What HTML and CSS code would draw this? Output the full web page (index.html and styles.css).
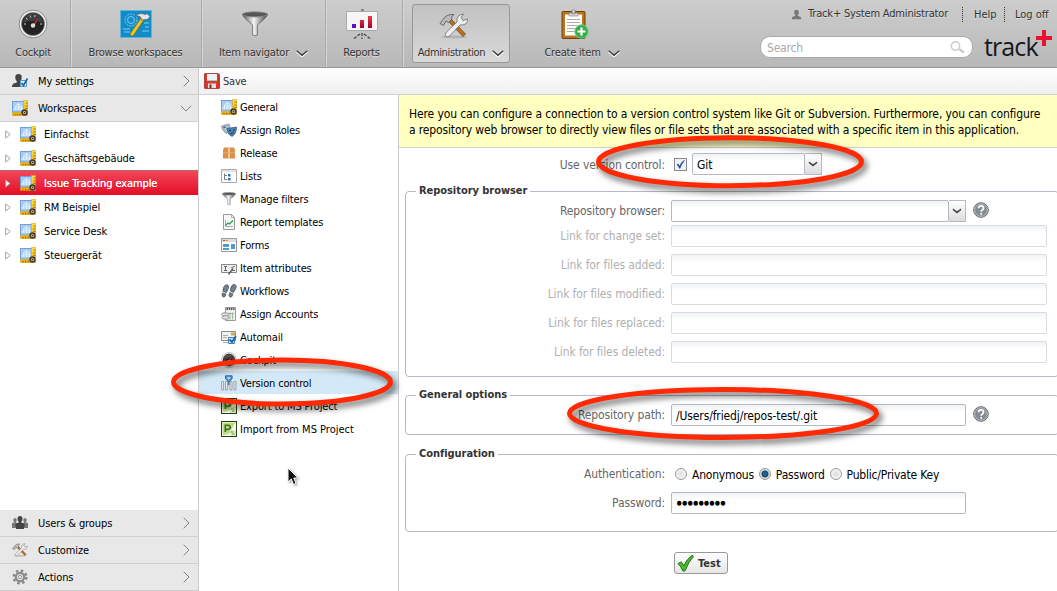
FILE: index.html
```html
<!DOCTYPE html>
<html lang="en">
<head>
<meta charset="utf-8">
<title>Track+ Version control</title>
<link rel="stylesheet" href="styles.css">
</head>
<body>
<svg class="defs" aria-hidden="true">
  <defs>
    <linearGradient id="metal" x1="0" x2="1"><stop offset="0" stop-color="#555"/><stop offset=".45" stop-color="#f4f4f4"/><stop offset="1" stop-color="#444"/></linearGradient>
    <linearGradient id="bar" x1="0" y1="0" x2="0" y2="1"><stop offset="0" stop-color="#f03a4c"/><stop offset="1" stop-color="#a80030"/></linearGradient>
    <linearGradient id="ruler" x1="0" y1="0" x2="0" y2="1"><stop offset="0" stop-color="#ffe14a"/><stop offset="1" stop-color="#e9a800"/></linearGradient>
    <linearGradient id="chrome" x1="0" y1="0" x2="0" y2="1"><stop offset="0" stop-color="#777"/><stop offset=".5" stop-color="#fff"/><stop offset="1" stop-color="#888"/></linearGradient>
    <symbol id="i-gauge" viewBox="0 0 30 30">
      <circle cx="15" cy="15" r="13.900" fill="#eee" stroke="#777" stroke-width=".8"/>
      <circle cx="15" cy="15" r="11.500" fill="#222" stroke="#888" stroke-width=".6"/>
      <path d="M5 14a10 10 0 0 1 20 0q-10-4-20 0" fill="#555" opacity=".6"/>
      <g stroke="#ccc" stroke-width="1"><path d="M6 15h2M8 9l1.600 1.400M12 6.500l.8 2M17 6l-.2 2M24 15h-2"/></g>
      <path d="M14 17 20.500 8.500 16.500 17.500z" fill="#e8232c"/>
      <circle cx="15" cy="16.500" r="2.200" fill="#ddd"/>
    </symbol>
    <symbol id="i-work" viewBox="0 0 16 16">
      <rect x=".5" y="1.500" width="12" height="10.500" fill="#a9cdf4" stroke="#6f9fd8"/>
      <path d="M3.500 10V6L6.500 3.500 9.500 6v4M3.500 7h6M6.500 4v6M1 9h11" stroke="#e3f1ff" fill="none"/>
      <path d="M11.500.5h4v15H.5v-3h11z" fill="url(#ruler)" stroke="#d8a410" stroke-width=".6"/>
      <path d="M13.500 3h2M13.500 6h2M13.500 8.500h2M3 14v1.500M5.500 14v1.500M8 14v1.500" stroke="#876000" stroke-width=".8"/>
      <circle cx="12.500" cy="12.500" r="2.400" fill="#d2c9b4" stroke="#4a3a2c" stroke-width="1.600"/>
      <circle cx="12.500" cy="12.500" r=".8" fill="#3b2b20"/>
    </symbol>
    <symbol id="i-funnel" viewBox="0 0 28 28">
      <path d="M1 3.500Q1 6 11.500 14.500V25q2.500 1.500 5 0V14.500Q27 6 27 3.500z" fill="url(#metal)" stroke="#555" stroke-width=".7"/>
      <ellipse cx="14" cy="3.500" rx="13" ry="2.600" fill="#555" stroke="#8a8a8a"/>
    </symbol>
    <symbol id="i-tools" viewBox="0 0 30 26">
      <ellipse cx="15" cy="24" rx="13" ry="1.500" fill="#888" opacity=".4"/>
      <path d="M8.500 7.500 24 23.500 26.500 21 11 5z" fill="#b7701d" stroke="#6f3c0b" stroke-width=".7"/>
      <path d="M1 10.500 4 6.500Q7 1 15 1.500 11.500 3 13 6L9.500 9.500 7 8 4.500 12.500z" fill="#bbb" stroke="#555" stroke-width=".8"/>
      <path d="M7 23.500Q5 21 7.500 19L18 9Q17 2 24.500 1L22 4.500l2 3 4.500-1.500Q29 12.500 21 12L10.500 23q-2 1.500-3.500.5z" fill="#eee" stroke="#777" stroke-width=".9"/>
    </symbol>
    <symbol id="i-user" viewBox="0 0 16 14"><path d="M8 0q3.500 0 3.500 3.500T9.500 8q.2 1.500 3 2 2.500.5 2.500 4H1q0-3.500 2.500-4 2.800-.5 3-2-2-1-2-4.500T8 0z"/></symbol>
    <symbol id="i-check" viewBox="0 0 16 16"><path d="M1 8 4 6.500 6.500 10Q9 4 14.500 0L15.500 1.500Q11 6 7.500 15H5.500Q4 11 1 8z"/></symbol>
    <symbol id="i-down" viewBox="0 0 12 7"><path d="M.7.700 6 5.600 11.300.700" fill="none" stroke="#fff" stroke-width="2.200" transform="translate(0 .6)"/><path d="M.7.700 6 5.300 11.300.700" fill="none" stroke="#333" stroke-width="1.300"/></symbol>
    <symbol id="i-right" viewBox="0 0 7 12"><path d="M.7.700 6 6 .7 11.300" fill="none" stroke="#777" stroke-width=".9"/></symbol>
    <symbol id="i-tri" viewBox="0 0 6 9"><path d="M.7.900 5.200 4.500.7 8.100z" fill="#fff" stroke="#999" stroke-width=".9"/></symbol>
    <symbol id="i-project" viewBox="0 0 16 16">
      <rect x=".5" y=".5" width="15" height="15" fill="#fff" stroke="#26420f"/>
      <path d="M1.500 1.500h13L8 13l-6.500 1.500z" fill="#bcdc88"/><path d="M9 15V9h6v6z" fill="#dcebc5"/>
      <path d="M4.300 11V4.200H7q2.300.2 2.300 2.100T7 8.400H4.300" fill="none" stroke="#3c7413" stroke-width="1.600"/><path d="M9.500 11h3M11 13h2.500" stroke="#79a23d"/>
    </symbol>
    <symbol id="i-help" viewBox="0 0 16 16">
      <circle cx="8" cy="8" r="7.300" fill="#858b92" stroke="#62676d"/><circle cx="8" cy="8" r="6.300" fill="none" stroke="#c2c6ca" stroke-width=".9"/>
      <path d="M5.500 6.200Q5.700 3.900 8.100 3.900T10.600 6.200Q10.500 7.300 9.300 8 8.200 8.600 8.200 9.800M8.200 11v1.700" fill="none" stroke="#fff" stroke-width="1.700"/>
    </symbol>
    <symbol id="i-chev" viewBox="0 0 10 6"><path d="M1 .5 5 3.200 9 .5 9.300 2 5 5.500.7 2z" fill="#444"/></symbol>
  </defs>
</svg>

<header class="top">
  <nav class="nav">
    <a class="cell c1"><svg width="30" height="30"><use href="#i-gauge"/></svg><span>Cockpit</span></a>
    <a class="cell c2"><svg width="32" height="30" viewBox="0 0 32 30"><rect x=".5" y="1.500" width="31" height="27" fill="#128cc9" stroke="#5cb4df"/><g fill="none" stroke="#7fcbee"><circle cx="11" cy="11" r="6" stroke-dasharray="2 1"/><circle cx="11" cy="11" r="3.500"/><path d="M3 20h7M4 23h6M24 14h5M25 18h4M22 22h7"/></g><path d="M10 25 21.500 8.500 24 10.500 13 27q-2 .5-3-2z" fill="#f4c51b" stroke="#8c6500" stroke-width=".6"/><path d="M15 7Q20 3 25 5.500L27 4.500 30 7.500 27.500 10.500 21.500 11 20.500 8q-3-2-5.500-1z" fill="#e4e4e4" stroke="#555" stroke-width=".7"/></svg><span>Browse workspaces</span></a>
    <a class="cell c3"><svg width="28" height="30"><use href="#i-funnel" y="2" width="28" height="27"/></svg><span class="dd"><span>Item navigator</span><svg width="12" height="7"><use href="#i-down"/></svg></span></a>
    <a class="cell c4"><svg width="32" height="32" viewBox="0 0 32 32"><path d="M.5 2.500h31v19H.5z" fill="#f6f6f6" stroke="#aaa"/><path d="M15 0h3v2h-3z" fill="#888"/><path d="M6 15h4v4H6z" fill="#5a14c8"/><path d="M14 11h4v8h-4zM22 7h4v12h-4z" fill="url(#bar)"/><path d="M16 24v6M14 25 8 29.500M18 25l6 4.500" stroke="#444" stroke-width="1.300" stroke-dasharray="3 1.500"/></svg><span>Reports</span></a>
    <a class="cell c5 on"><svg width="30" height="30"><use href="#i-tools" y="3" width="30" height="26"/></svg><span class="dd"><span>Administration</span><svg width="12" height="7"><use href="#i-down"/></svg></span></a>
    <a class="cell c6"><svg width="28" height="32" viewBox="0 0 28 32"><rect x="1" y="2.500" width="23" height="27" rx="1" fill="#b87520" stroke="#704008"/><path d="M4 5.500h17v21H4z" fill="#fff"/><path d="M8 4h9v3H8zM11 1h3v4h-3z" fill="#ddd" stroke="#777" stroke-width=".6"/><path d="M6 10.500h13M6 13.500h13M6 16.500h10M6 19.500h8M6 22.500h7" stroke="#aaa"/><circle cx="20.500" cy="22.500" r="6.700" fill="#38ae49" stroke="#72cf7e"/><path d="M20.500 18.500v8M16.500 22.500h8" stroke="#fff" stroke-width="2.200"/></svg><span class="dd"><span>Create item</span><svg width="12" height="7"><use href="#i-down"/></svg></span></a>
  </nav>
  <div class="right">
    <div class="links"><svg width="11" height="11" fill="#777"><use href="#i-user"/></svg><span class="who">Track+ System Administrator</span><span class="help">Help</span><span class="log">Log off</span></div>
    <div class="find"><div class="search"><span>Search</span><svg width="16" height="13" viewBox="0 0 16 13" fill="none" stroke="#ccc"><circle cx="5.500" cy="5" r="4.200" stroke-width="1.400"/><path d="M9 8l5 3.500" stroke-width="2.200"/></svg></div><div class="logo"><span>track</span><svg width="16" height="16" viewBox="0 0 16 16"><path d="M8 0v16M0 8h16" stroke="#ea1030" stroke-width="4"/></svg></div></div>
  </div>
</header>

<div class="body">
  <aside class="side">
    <div class="bar"><svg width="16" height="16" viewBox="0 0 16 16"><use href="#i-user" x="-1" y="1" width="15" height="13" fill="#444"/><path d="M8.500 7.500h6v6h-6z" fill="#d9ecfa" stroke="#5c9bc8"/><path d="M9.500 10l2 2.500 4-7" fill="none" stroke="#1565a5" stroke-width="1.700"/></svg><span>My settings</span><svg class="arr" width="7" height="12"><use href="#i-right"/></svg></div>
    <div class="bar"><svg width="16" height="16"><use href="#i-work"/></svg><span>Workspaces</span><svg class="arr dn" width="12" height="7" viewBox="0 0 12 7"><path d="M.7.700 6 6 11.300.700" fill="none" stroke="#777" stroke-width=".9"/></svg></div>
    <div class="tree">
      <div class="node"><svg width="6" height="9"><use href="#i-tri"/></svg><svg width="16" height="16"><use href="#i-work"/></svg><span>Einfachst</span></div>
      <div class="node"><svg width="6" height="9"><use href="#i-tri"/></svg><svg width="16" height="16"><use href="#i-work"/></svg><span>Geschäftsgebäude</span></div>
      <div class="node sel"><svg width="6" height="9"><use href="#i-tri"/></svg><svg width="16" height="16"><use href="#i-work"/></svg><span>Issue Tracking example</span></div>
      <div class="node"><svg width="6" height="9"><use href="#i-tri"/></svg><svg width="16" height="16"><use href="#i-work"/></svg><span>RM Beispiel</span></div>
      <div class="node"><svg width="6" height="9"><use href="#i-tri"/></svg><svg width="16" height="16"><use href="#i-work"/></svg><span>Service Desk</span></div>
      <div class="node"><svg width="6" height="9"><use href="#i-tri"/></svg><svg width="16" height="16"><use href="#i-work"/></svg><span>Steuergerät</span></div>
    </div>
    <div class="bar"><svg width="16" height="16" viewBox="0 0 16 16"><g fill="#777"><use href="#i-user" x="-1" y="1" width="8" height="11"/><use href="#i-user" x="9" y="1" width="8" height="11"/><path d="M0 8h5v5H0zM11 8h5v5h-5z"/></g><use href="#i-user" x="2" y="1" width="12" height="10" fill="#444"/><path d="M4 9h8v5H4z" fill="#444"/></svg><span>Users &amp; groups</span><svg class="arr" width="7" height="12"><use href="#i-right"/></svg></div>
    <div class="bar"><svg width="16" height="16"><use href="#i-tools"/></svg><span>Customize</span><svg class="arr" width="7" height="12"><use href="#i-right"/></svg></div>
    <div class="bar"><svg width="16" height="16" viewBox="0 0 16 16" fill="none"><circle cx="8" cy="8" r="6.300" stroke="#888" stroke-width="2.500" stroke-dasharray="2.500 2.450"/><circle cx="8" cy="8" r="4.200" stroke="#8a8a8a" stroke-width="2.200"/><circle cx="8" cy="8" r="1.700" stroke="#999"/></svg><span>Actions</span><svg class="arr" width="7" height="12"><use href="#i-right"/></svg></div>
  </aside>

  <section class="work">
    <div class="toolbar"><svg width="16" height="16" viewBox="0 0 16 16"><path d="M.7.700h13.600l1 1v13.600H.7z" fill="#d9392f" stroke="#a82720"/><path d="M3 1h10v7H3z" fill="#eef3f7"/><path d="M3 7h10v1H3z" fill="#9cb"/><path d="M4 10.500h8V15H4z" fill="#ddd"/><path d="M5.500 11.500h2V15h-2z" fill="#8c2320"/></svg><span>Save</span></div>
    <div class="split">
      <ul class="menu">
        <li><svg width="16" height="16"><use href="#i-work"/></svg><span>General</span></li>
        <li><svg width="16" height="16" viewBox="0 0 16 16"><path d="M.5 4 8 2l1.500 5Q8 11 5 11.500 1.500 9 .5 4z" fill="#a9bdcf" stroke="#6f8497" stroke-width=".7"/><path d="M6 6.500 15.500 5Q15.500 12 11 14.500 6.500 12.500 6 6.500z" fill="#4d7fb0" stroke="#2b5680" stroke-width=".7"/><path d="M2.500 5.500l2-.5M8 8.500l2 .2M12 8.500l2-.8M9.500 12l3-1.500" stroke="#1d3650"/></svg><span>Assign Roles</span></li>
        <li><svg width="16" height="16" viewBox="0 0 16 16"><path d="M3 2.500h10l1 2.500v8.500H2V5z" fill="#dc8f4c"/><path d="M7.200 2.500h1.600v11H7.200z" fill="#f5d9ac"/><path d="M2 7.500h12" stroke="#e8a868"/></svg><span>Release</span></li>
        <li><svg width="16" height="16" viewBox="0 0 16 16"><path d="M.5 1.500h15v13H.5z" fill="#fff" stroke="#aaa"/><path d="M1 2h14v2H1z" fill="#e3e3e3"/><path d="M3.500 5.500v6H6M3.500 7.500H6" fill="none" stroke="#777"/><path d="M7 6h2.500v2.500H7zM7 10h2.500v2.500H7z" fill="#2672c4"/></svg><span>Lists</span></li>
        <li><svg width="16" height="14"><use href="#i-funnel"/></svg><span>Manage filters</span></li>
        <li><svg width="16" height="16" viewBox="0 0 16 16"><path d="M2.500.5h8l3 3v12h-11z" fill="#f8f8f8" stroke="#999"/><path d="M10.500.5v3h3M4.500 6v6.500h7.500" fill="none" stroke="#aaa"/><path d="M4.500 11.500 7 9l1.500 1L12 6.500" fill="none" stroke="#2d9b4b" stroke-width="1.300"/></svg><span>Report templates</span></li>
        <li><svg width="16" height="16" viewBox="0 0 16 16"><path d="M.5 1.500h15v13H.5z" fill="#fff" stroke="#999"/><path d="M1 2h14v3H1z" fill="#ddd"/><path d="M2 3.500h2" stroke="#d33"/><path d="M5 3.500h2" stroke="#e7a020"/><path d="M2 7h6v3H2zM10 7h4v5h-4zM2 11h6v2H2z" fill="#4d9bd3"/></svg><span>Forms</span></li>
        <li><svg width="16" height="16" viewBox="0 0 16 16"><path d="M.5 4.500h15v8H.5z" fill="#eee" stroke="#888"/><path d="M3 6.500h3M4.500 6.500v4M3 10.500h3M10 8l4-2M10 10.500h4" stroke="#666"/><path d="M7.500 14.500l4.500-6" stroke="#555" stroke-width="1.300"/></svg><span>Item attributes</span></li>
        <li><svg width="16" height="16" viewBox="0 0 16 16"><g fill="#70808e" stroke="#3f4b56" stroke-width=".7"><path d="M4.500 2Q8 1 7.500 5L5.500 9.500 2 8.500Q1.500 4 4.500 2zM1.500 10l3.500 1q-.5 3.500-2.700 3T1.500 10zM12 1.500Q16 1 15 5l-2.500 4.500L9.500 8Q9 4 12 1.500zM9 9.500l3 1.500q-1 4-3 3t0-4.500z"/></g></svg><span>Workflows</span></li>
        <li><svg width="16" height="16" viewBox="0 0 16 16"><path d="M4.500 1.500h10v13h-10z" fill="#eef1ee" stroke="#999"/><path d="M5.500 3h8" stroke="#555" stroke-width="1.800" stroke-dasharray="1.500 .7"/><path d="M9 6.500v7M11.500 6.500v7M7 7.500h6" stroke="#9fb3a0"/><ellipse cx="4" cy="8.500" rx="3.500" ry="1.800" fill="#ddd" stroke="#999"/><ellipse cx="4.500" cy="11.500" rx="3.500" ry="1.800" fill="#e4e4e4" stroke="#999"/></svg><span>Assign Accounts</span></li>
        <li><svg width="16" height="16" viewBox="0 0 16 16"><path d="M.5 2.500h14v9H.5z" fill="#f1f1f1" stroke="#888"/><path d="M2 6.500h5M2 8.500h4M2 13.500h6" stroke="#aaa"/><path d="M10 3.500h4v3h-4z" fill="#caa95a"/><path d="M7.500 8.500h6v6h-6z" fill="#cfe4f6" stroke="#4582b8"/><path d="M8.500 10.500l2.500 2.500 4-6" fill="none" stroke="#1f66a8" stroke-width="1.800"/></svg><span>Automail</span></li>
        <li><svg width="16" height="16"><use href="#i-gauge"/></svg><span>Cockpit</span></li>
        <li class="cur"><svg width="16" height="16" viewBox="0 0 16 16"><g fill="#eee" stroke="#999" stroke-width=".9"><path d="M.6 6.500h2v8.500h-2zM4.600 6.500h2v8.500h-2zM9 6.500h2v8.500H9zM13 6.500h2v8.500h-2z"/></g><path d="M7.800 5v5" stroke="#285f9f" stroke-width="1.200"/><path d="M4.500 .8h6.600v3L7.800 7 4.500 3.800z" fill="#5a9ad6" stroke="#285f9f" stroke-width=".9"/><path d="M6 2.200h3.600L7.800 4.600z" fill="#cfe6fa"/></svg><span>Version control</span></li>
        <li><svg width="16" height="16"><use href="#i-project"/></svg><span>Export to MS Project</span></li>
        <li><svg width="16" height="16"><use href="#i-project"/></svg><span class="wide">Import from MS Project</span></li>
      </ul>
      <main class="form">
        <div class="note"><p class="n1">Here you can configure a connection to a version control system like Git or Subversion. Furthermore, you can configure</p><p class="n2">a repository web browser to directly view files or file sets that are associated with a specific item in this application.</p></div>
        <div class="row use"><label>Use version control:</label><span class="tick"><svg width="9" height="9"><use href="#i-check" fill="#33519b"/></svg></span><span class="combo git"><span class="box">Git</span><span class="btn"><svg width="10" height="6"><use href="#i-chev"/></svg></span></span></div>
        <fieldset class="f1"><legend>Repository browser</legend>
          <div class="row"><label>Repository browser:</label><span class="combo rb"><span class="box"></span><span class="btn"><svg width="10" height="6"><use href="#i-chev"/></svg></span></span><svg class="q" width="16" height="16"><use href="#i-help"/></svg></div>
          <div class="row off"><label>Link for change set:</label><span class="box"></span></div>
          <div class="row off"><label>Link for files added:</label><span class="box"></span></div>
          <div class="row off"><label>Link for files modified:</label><span class="box"></span></div>
          <div class="row off"><label>Link for files replaced:</label><span class="box"></span></div>
          <div class="row off"><label>Link for files deleted:</label><span class="box"></span></div>
        </fieldset>
        <fieldset class="f2"><legend>General options</legend>
          <div class="row"><label>Repository path:</label><span class="box mid">/Users/friedj/repos-test/.git</span><svg class="q" width="16" height="16"><use href="#i-help"/></svg></div>
        </fieldset>
        <fieldset class="f3"><legend>Configuration</legend>
          <div class="row auth"><label>Authentication:</label><i class="radio"></i><span class="r">Anonymous</span><i class="radio"></i><span class="r">Password</span><i class="radio"></i><span class="r">Public/Private Key</span></div>
          <div class="row"><label>Password:</label><span class="box mid dots">•••••••••</span></div>
        </fieldset>
        <button class="test"><svg width="17" height="17"><use href="#i-check" fill="#4cb82f" stroke="#1e6b12" stroke-width=".9"/></svg><span>Test</span></button>
      </main>
    </div>
  </section>
</div>

<svg class="rings" width="1057" height="591" fill="none" stroke="#ff2a04" stroke-width="5">
  <ellipse cx="730" cy="161.700" rx="131.500" ry="24"/>
  <ellipse cx="282" cy="382" rx="108.500" ry="22"/>
  <ellipse cx="723" cy="413.500" rx="153.500" ry="24"/>
</svg>
<svg class="mouse" width="12" height="19" viewBox="0 0 12 19"><path d="M1 1v14l3.300-3 2.200 5.500 2.500-1L6.800 11H11z" fill="#111" stroke="#fff"/></svg>
</body>
</html>
```
FILE: styles.css
```css
* { box-sizing: border-box; }
body {
  margin: 0; width: 1057px; height: 591px; overflow: hidden; position: relative;
  display: flex; flex-direction: column; background: #fff; color: #000;
  font: 11px/14px "DejaVu Sans Condensed", "DejaVu Sans", sans-serif;
  font-stretch: condensed; white-space: nowrap;
}
svg { flex: none; display: block; }
.defs { position: absolute; width: 0; height: 0; }

.top { height: 68px; flex: none; display: flex; justify-content: space-between; background: linear-gradient(#cdcdcd, #b8b8b8); border-bottom: 1px solid #999; color: #333; text-shadow: 0 1px 0 #ddd; }
.nav { display: flex; letter-spacing: -.2px; }
.cell { display: flex; flex-direction: column; align-items: center; justify-content: space-between; padding: 9px 0 7px; border-right: 1px solid #aaa; box-shadow: 1px 0 #d6d6d6; }
.c1 { width: 71px; padding-right: 4px; }
.c2 { width: 131px; padding-right: 1px; }
.c3 { width: 124px; }
.c3 > svg { margin-right: 18px; }
.c4 { width: 77px; padding-right: 5px; }
.c5 { width: 98px; height: 59px; margin: 4px 0 0 9px; padding: 5px 0 2px; border: 1px solid #999; border-radius: 3px; background: linear-gradient(#c2c2c2, #d8d8d8); box-shadow: none; }
.c5 > svg, .c6 > svg { margin-right: 14px; }
.c5 .dd { letter-spacing: -.35px; }
.c6 { width: 144px; border: 0; box-shadow: none; }
.dd { display: flex; align-items: center; gap: 7px; }
.right { width: 297px; display: flex; flex-direction: column; padding: 6px 0 0; }
.links { display: flex; align-items: center; height: 16px; padding-left: 31px; }
.who { margin-left: 6px; width: 154px; letter-spacing: -.17px; }
.help { border-left: 1px dotted #333; padding-left: 11px; width: 42px; line-height: 15px; }
.log { border-left: 1px dotted #333; padding-left: 10px; line-height: 15px; }
.find { display: flex; padding-top: 14px; }
.search { width: 213px; height: 22px; border: 1px solid #aaa; border-radius: 10px; background: #fff; color: #aaa; display: flex; align-items: center; justify-content: space-between; padding: 0 6px; text-shadow: none; font-size: 12px; letter-spacing: -.2px; }
.search span { padding-top: 1px; }
.logo { display: flex; margin-left: 11px; color: #171720; text-shadow: none; font: 25px/20px "Open Sans", sans-serif; letter-spacing: -.9px; }
.logo svg { margin: -6px 0 0 -2px; }

.body { flex: 1; display: flex; min-height: 0; }
.side { width: 199px; border-right: 1px solid #ccc; display: flex; flex-direction: column; letter-spacing: -.1px; }
.bar { height: 27px; flex: none; background: #e8e8e8; border-bottom: 1px solid #cfcfcf; display: flex; align-items: center; padding: 0 8px 0 12px; }
.bar span { margin-left: 10px; flex: 1; }
.bar span, .node span, .menu span, .toolbar span { padding-top: 2px; }
.dn { margin-right: -2px; }
.tree { flex: 1; }
.node { height: 24px; display: flex; align-items: center; padding-left: 5px; gap: 8px; }
.node svg + svg { margin-left: 1px; }
.sel { height: 25px; border-top: 1px solid #b06a70; background: linear-gradient(#f44658, #e30d28); color: #fff; text-shadow: 0 0 .6px #fff; }

.work { flex: 1; display: flex; flex-direction: column; min-width: 0; }
.toolbar { height: 27px; display: flex; align-items: center; gap: 3px; padding-left: 5px; color: #333; background: linear-gradient(#fff, #efefef); border-bottom: 1px solid #d0d0d0; letter-spacing: -.2px; }
.split { flex: 1; display: flex; min-height: 0; }
.menu { width: 200px; margin: 0; padding: 0; list-style: none; border-right: 1px solid #ccc; letter-spacing: -.16px; }
.menu li { height: 23px; display: flex; align-items: center; gap: 3px; padding-left: 22px; }
.menu .cur { background: #d3e9f7; }
.menu .wide { letter-spacing: 0; }

.form { flex: 1; min-width: 0; overflow: hidden; font-size: 12px; letter-spacing: -.12px; }
.note { height: 53px; background: #ffffc0; border-bottom: 1px solid #d0d0d0; padding: 11px 0 0 10px; }
.note p { margin: 0; line-height: 16px; }
.n2 { letter-spacing: -.14px; }
.row { display: flex; align-items: center; height: 22px; }
.row label { width: 260px; text-align: right; color: #666; margin-right: 6px; flex: none; }
.use { margin: 5px 0 9px; }
.use label { width: 266px; padding-top: 1px; }
.tick { width: 13px; height: 13px; border: 1px solid #888; background: #eef2f8; display: flex; align-items: center; justify-content: center; margin: 0 5px 0 3px; }
.box { display: block; height: 22px; border: 1px solid #b5b8c8; border-radius: 2px; background: linear-gradient(#f0f3f4, #fff 7px); padding: 4px; }
.combo { display: flex; }
.btn { width: 17px; height: 22px; border: 1px solid #b5b8c8; border-left: 0; background: linear-gradient(#fff, #dcdcdc); display: flex; align-items: center; justify-content: center; }
.git .box { width: 113px; }
.rb .box { width: 278px; }
.q { margin: -3px 0 0 7px; }
.mid { width: 295px; }
fieldset { margin: 0 0 0 6px; padding: 0; width: 654px; border: 1px solid #b5b8c8; border-radius: 4px; }
fieldset .row label { width: 259px; }
legend { height: 14px; margin-left: 10px; padding: 0 3px; font-weight: bold; font-size: 11px; letter-spacing: -.05px; color: #333; }
.f1 { height: 193px; padding-top: 2px; }
.f2 { height: 47px; margin-top: 11px; padding-top: 2px; }
.f3 { height: 85px; margin-top: 12px; padding-top: 2px; }
.off { margin-top: 7px; }
.row:not(.off) + .off { margin-top: 3px; }
.off label { color: #b0b0b0 !important; }
.off .box { width: 376px; border-color: #dadce4; }
.auth { margin-bottom: 7px; }
.r { padding-top: 2px; letter-spacing: -.2px; }
.radio { width: 12px; height: 12px; border-radius: 50%; border: 1px solid #999; background: radial-gradient(#ddd, #fff); margin: 0 5px 0 4px; }
.r + .radio { margin-left: 5px; }
.r + .radio:nth-of-type(2) { background: radial-gradient(#15649c 0 2px, #245 3px, #ddd 4px); }
.dots { letter-spacing: -.9px; -webkit-text-stroke: 1.300px #000; }
.test { margin: 20px 0 0 275px; width: 54px; height: 22px; border: 1px solid #999; border-radius: 3px; background: linear-gradient(#fff, #e6e6e6); display: flex; align-items: center; padding: 0 0 0 2px; gap: 4px; font: bold 11px/14px "DejaVu Sans Condensed", sans-serif; color: #333; }
.test span { padding-top: 2px; }

.rings { position: absolute; left: 0; top: 0; filter: drop-shadow(3px 4px 3px rgba(0, 0, 0, .6)); }
.mouse { position: absolute; left: 287px; top: 467px; filter: drop-shadow(1px 1px 1px rgba(0, 0, 0, .4)); }
```
